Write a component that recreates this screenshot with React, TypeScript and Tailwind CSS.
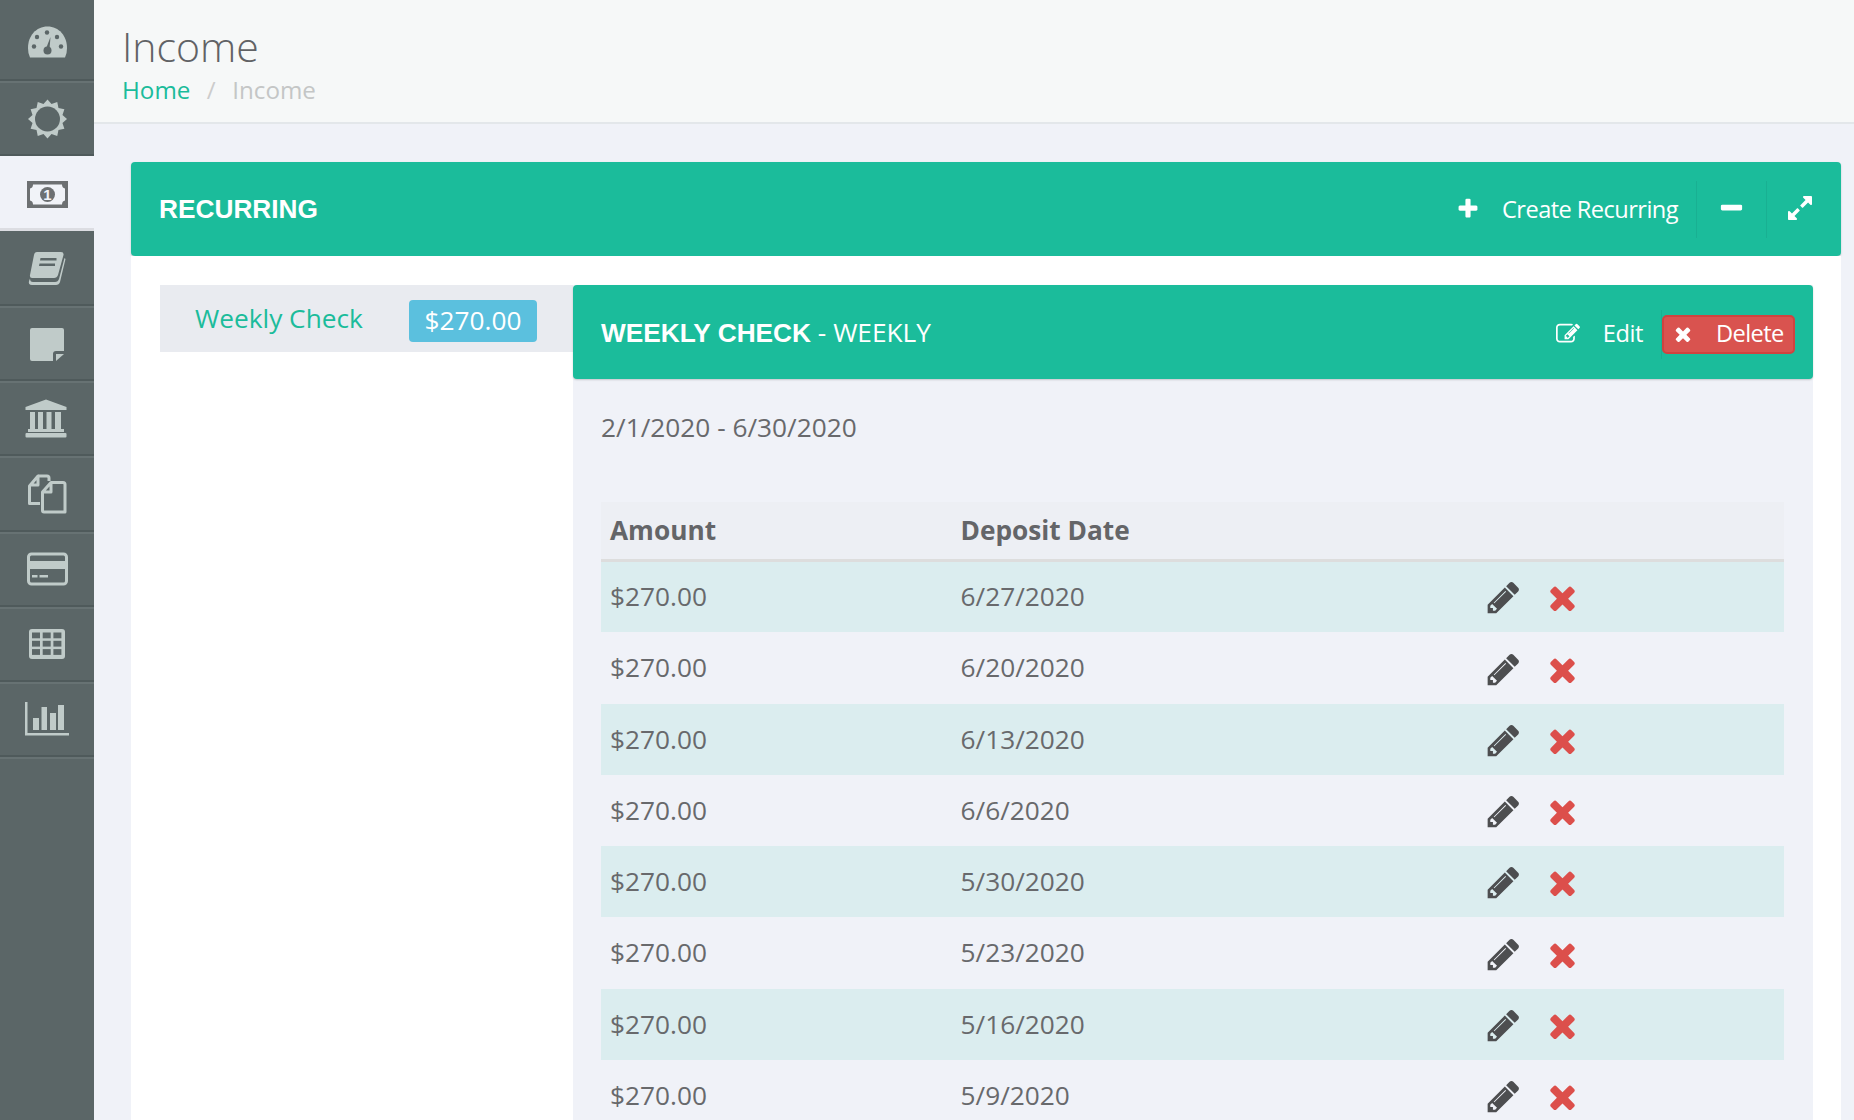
import React from "react";

const P = {
  pencil: "M491 1536l91-91-235-235-91 91v107h128v128h107zm523-928q0-22-22-22-10 0-17 7l-542 542q-7 7-7 17 0 22 22 22 10 0 17-7l542-542q7-7 7-17zm-54-192l416 416-832 832h-416v-416zm683 96q0 53-37 90l-166 166-416-416 166-165q36-38 90-38 53 0 91 38l235 234q37 39 37 91z",
  times: "M1490 1322q0 40-28 68l-136 136q-28 28-68 28t-68-28l-294-294-294 294q-28 28-68 28t-68-28l-136-136q-28-28-28-68t28-68l294-294-294-294q-28-28-28-68t28-68l136-136q28-28 68-28t68 28l294 294 294-294q28-28 68-28t68 28l136 136q28 28 28 68t-28 68l-294 294 294 294q28 28 28 68z",
  plus: "M1600 736v192q0 40-28 68t-68 28h-416v416q0 40-28 68t-68 28h-192q-40 0-68-28t-28-68v-416h-416q-40 0-68-28t-28-68v-192q0-40 28-68t68-28h416v-416q0-40 28-68t68-28h192q40 0 68 28t28 68v416h416q40 0 68 28t28 68z",
  minus: "M1600 736v192q0 40-28 68t-68 28h-1216q-40 0-68-28t-28-68v-192q0-40 28-68t68-28h1216q40 0 68 28t28 68z",
  expand: "M883 1056q0 13-10 23l-332 332 144 144q19 19 19 45t-19 45-45 19h-448q-26 0-45-19t-19-45v-448q0-26 19-45t45-19 45 19l144 144 332-332q10-10 23-10t23 10l114 114q10 10 10 23zm781-864v448q0 26-19 45t-45 19-45-19l-144-144-332 332q-10 10-23 10t-23-10l-114-114q-10-10-10-23t10-23l332-332-144-144q-19-19-19-45t19-45 45-19h448q26 0 45 19t19 45z",
  edit: "M888 1184l116-116-152-152-116 116v56h96v96h56zm440-720q-16-16-33 1l-350 350q-17 17-1 33t33-1l350-350q17-17 1-33zm80 594v190q0 119-84.500 203.500t-203.500 84.500h-832q-119 0-203.500-84.500t-84.500-203.500v-832q0-119 84.500-203.500t203.500-84.500h832q63 0 117 25 15 7 18 23 3 17-9 29l-49 49q-14 14-32 8-23-6-45-6h-832q-66 0-113 47t-47 113v832q0 66 47 113t113 47h832q66 0 113-47t47-113v-126q0-13 9-22l64-64q15-15 35-7t20 29zm-96-738l288 288-672 672h-288v-288zm444 132l-92 92-288-288 92-92q28-28 68-28t68 28l152 152q28 28 28 68t-28 68z",
};

function Fa({ d, className }: { d: string; className: string }) {
  return (
    <svg viewBox="0 0 1792 1792" className={className} fill="currentColor">
      <path d={d} />
    </svg>
  );
}

function sunPoints() {
  const pts: string[] = [];
  for (let i = 0; i < 24; i++) {
    const r = i % 2 === 0 ? 19.500 : 15.500;
    const a = (i * Math.PI) / 12 - Math.PI / 2;
    pts.push(`${(22.500 + r * Math.cos(a)).toFixed(2)},${(22 + r * Math.sin(a)).toFixed(2)}`);
  }
  return pts.join(" ");
}

const side: React.ReactNode[] = [
  <svg viewBox="0 0 44 44" className="w-11 h-11" fill="#c0cbc9" key="a">
    <path d="M5 38.500 Q3 35 3 29 C3 17 11 7.500 22.500 7.500 C34 7.500 42 17 42 29 Q42 35 40 38.500 Z" />
    <circle cx="22" cy="13.500" r="2.200" fill="#5b6667" />
    <circle cx="12" cy="18" r="2.200" fill="#5b6667" />
    <circle cx="32" cy="18" r="2.200" fill="#5b6667" />
    <circle cx="9" cy="27.500" r="2.200" fill="#5b6667" />
    <circle cx="36" cy="27.500" r="2.200" fill="#5b6667" />
    <path d="M25.500 18 L24.500 30 H20.800 Z" fill="#5b6667" />
    <circle cx="22.500" cy="31.500" r="4" fill="#5b6667" />
  </svg>,
  <svg viewBox="0 0 44 44" className="w-11 h-11" key="b">
    <polygon points={sunPoints()} fill="#c0cbc9" />
    <circle cx="22.500" cy="22" r="12.500" fill="#5b6667" />
  </svg>,
  <svg viewBox="0 0 44 44" className="w-11 h-11" key="c">
    <rect x="2" y="10" width="41" height="27" fill="#6d7072" />
    <path d="M8 13.500 H37 Q37 17 40 17.500 V29.500 Q37 30 37 33.500 H8 Q8 30 5 29.500 V17.500 Q8 17 8 13.500 Z" fill="#f1f3f8" />
    <circle cx="22.500" cy="23.500" r="7.500" fill="#6d7072" />
    <text x="22.500" y="29" textAnchor="middle" fontSize="15" fontWeight="700" fill="#f1f3f8" fontFamily="'Liberation Sans', sans-serif">1</text>
  </svg>,
  <svg viewBox="0 0 44 44" className="w-11 h-11" fill="#c0cbc9" key="d">
    <path fillRule="evenodd" d="M12 5 H36 Q39 5 38.500 8 L33 28 Q32 31 29 31 H7 Q4.500 31 5 28 L9 8 Q9.500 5 12 5 Z M15.500 11 H31.500 V13.500 H15 Z M14.500 16.500 H30 V19 H14 Z" />
    <path d="M39.500 11 L40.500 12 L35 35 Q34 38 31 38 H7 Q3 38 4 34 L5 31.500 Q5 35 8 35 H30 Q33 35 34 32 Z" />
  </svg>,
  <svg viewBox="0 0 44 44" className="w-11 h-11" fill="#c0cbc9" key="e">
    <path d="M7 6 H37 Q39 6 39 8 V29 H31 Q28 29 28 32 V39 H7 Q5 39 5 37 V8 Q5 6 7 6 Z" />
    <path d="M31 32 H39 L31 39 Z" />
  </svg>,
  <svg viewBox="0 0 44 44" className="w-11 h-11" fill="#c0cbc9" key="f">
    <path d="M21 2.500 L41.500 10 V13 H0.500 V10 Z" />
    <rect x="5" y="15" width="5" height="17" />
    <rect x="13" y="15" width="5" height="17" />
    <rect x="21.500" y="15" width="5" height="17" />
    <rect x="30" y="15" width="6" height="17" />
    <rect x="3" y="32" width="36" height="3" />
    <rect x="0.500" y="36" width="41" height="4.500" rx="1" />
  </svg>,
  <svg viewBox="0 0 44 44" className="w-11 h-11" fill="none" stroke="#c0cbc9" strokeWidth="3" strokeLinejoin="round" key="g">
    <path d="M13 4 H22 Q24 4 24 6 V9 M15 31.500 H4.500 V14 L13 4 V13 H4.500" />
    <path d="M26 10.500 H38 Q40 10.500 40 12.500 V40 H19 Q17.500 40 17.500 38.500 V20 Z M26 10.500 V20 H17.500" />
  </svg>,
  <svg viewBox="0 0 44 44" className="w-11 h-11" key="h">
    <rect x="3.500" y="7" width="38" height="30" rx="3" fill="none" stroke="#c0cbc9" strokeWidth="3" />
    <rect x="2" y="14" width="41" height="8" fill="#c0cbc9" />
    <rect x="7" y="28" width="5.500" height="2.500" fill="#c0cbc9" />
    <rect x="14.500" y="28" width="8.500" height="2.500" fill="#c0cbc9" />
  </svg>,
  <svg viewBox="0 0 44 44" className="w-11 h-11" key="i">
    <rect x="4" y="7" width="36" height="30" rx="3" fill="#c0cbc9" />
    {[0, 1, 2].map((r) =>
      [0, 1, 2].map((c) => (
        <rect key={`${r}-${c}`} x={7 + c * 10.700} y={10.500 + r * 8.300} width={8} height={5.800} fill="#5b6667" />
      ))
    )}
  </svg>,
  <svg viewBox="0 0 44 44" className="w-11 h-11" fill="#c0cbc9" key="j">
    <path d="M0 5 H2.500 V36 H44 V38.500 H0 Z" />
    <rect x="8" y="21" width="6" height="12" />
    <rect x="16.500" y="10" width="5.500" height="23" />
    <rect x="25" y="16" width="6" height="17" />
    <rect x="33" y="8" width="6" height="25" />
  </svg>,
];

const rows = [
  { d: "6/27/2020", c: "h-[72px] bg-[#dbedef]" },
  { d: "6/20/2020", c: "h-[72px]" },
  { d: "6/13/2020", c: "h-[71px] bg-[#dbedef]" },
  { d: "6/6/2020", c: "h-[71px]" },
  { d: "5/30/2020", c: "h-[71px] bg-[#dbedef]" },
  { d: "5/23/2020", c: "h-[72px]" },
  { d: "5/16/2020", c: "h-[71px] bg-[#dbedef]" },
  { d: "5/9/2020", c: "h-[71px]" },
];

export default function App() {
  return (
    <div className="flex h-[1120px] w-[1854px] overflow-hidden bg-[#f0f2f8] text-[#68696c] [font-family:'Open_Sans',sans-serif]">
      <aside className="flex w-[94px] shrink-0 flex-col bg-[#5b6667]">
        {side.map((icon, i) => (
          <div
            key={i}
            className={
              i === 2
                ? "flex h-[75.100px] items-center justify-center border-b-[3px] border-[#dcdde2] bg-[#f0f2f8] pt-[2px]"
                : i === 0
                ? "flex h-[81px] items-center justify-center border-b-2 border-b-[#4f5a5b] pt-[2px] shadow-[0_2px_0_#677273]"
                : "flex h-[75.100px] items-center justify-center border-b-2 border-b-[#4f5a5b] pt-[2px] shadow-[0_2px_0_#677273]"
            }
          >
            {icon}
          </div>
        ))}
      </aside>
      <main className="flex min-w-0 flex-1 flex-col">
        <header className="h-[124px] shrink-0 border-b-2 border-[#e3e7ea] bg-[#f6f8f8] px-[28px] pt-[19px]">
          <h1 className="text-[41px] leading-[54px] font-light text-[#616265]">Income</h1>
          <div className="mt-[1px] flex text-[24.200px] leading-[32px]">
            <span className="text-[#1bbc9b]">Home</span>
            <span className="mx-[16.500px] text-[#cccccc]">/</span>
            <span className="text-[#c4c6c6]">Income</span>
          </div>
        </header>
        <div className="px-[37px] pt-[38px] pr-[13px]">
          <div className="flex h-[94px] items-center rounded-[4px] bg-[#1bbc9b] pr-[27px] pl-[28px] text-white shadow-[0_1px_2px_rgba(0,0,0,0.18)]">
            <div className="pt-[2px] text-[26.250px] font-bold [font-family:'Liberation_Sans',sans-serif]">RECURRING</div>
            <div className="ml-auto flex h-[57px] items-center">
              <Fa d={P.plus} className="mr-[22px] h-6 w-6" />
              <span className="pt-[2px] text-[23.600px] tracking-[-0.55px]">Create Recurring</span>
              <div className="ml-[18px] h-full border-l border-[#19b092]" />
              <div className="flex w-[69px] items-center justify-center"><Fa d={P.minus} className="mb-[2px] h-[27px] w-[27px]" /></div>
              <div className="h-full border-l border-[#19b092]" />
              <div className="flex w-[47px] items-center justify-end"><Fa d={P.expand} className="mb-[2px] h-7 w-7" /></div>
            </div>
          </div>
          <div className="flex bg-white pt-[29px] pr-[28px] pl-[29px]">
            <div className="flex h-[67px] w-[413px] shrink-0 items-center bg-[#e9ebf0] pt-[2px] pr-[36px] pl-[35px] text-[#1bbc9b]">
              <span className="mb-[2px] text-[26.250px]">Weekly Check</span>
              <span className="mt-[2px] ml-auto flex h-[42px] w-[128px] items-center justify-center rounded-[4px] bg-[#5bc0de] text-[26.250px] text-white">$270.00</span>
            </div>
            <div className="flex-1 bg-[#f0f2f8]">
              <div className="flex h-[94px] items-center rounded-[4px] bg-[#1bbc9b] pt-[4px] pr-[18px] pl-[28px] text-white shadow-[0_1px_2px_rgba(0,0,0,0.18)]">
                <div className="mb-[2px] text-[26.250px]">
                  <span className="font-bold [font-family:'Liberation_Sans',sans-serif]">WEEKLY CHECK</span>
                  <span> - WEEKLY</span>
                </div>
                <div className="ml-auto flex items-center">
                  <Fa d={P.edit} className="mr-[23px] h-6 w-6" />
                  <span className="text-[23.600px] tracking-[-0.4px]">Edit</span>
                  <div className="ml-[18px] h-[49px] border-l border-[#19b092]" />
                  <div className="flex h-[39px] w-[133px] items-center rounded-[5px] border-2 border-[#d0433f] bg-[#d9534f] pl-[8px]">
                    <Fa d={P.times} className="h-[22px] w-[22px]" />
                    <span className="ml-[22px] text-[23.600px] tracking-[-0.6px]">Delete</span>
                  </div>
                </div>
              </div>
              <div className="pt-[31px] pr-[29px] pl-[28px]">
                <div className="h-[92px] text-[26.250px] leading-[35px]">2/1/2020 - 6/30/2020</div>
                <table className="w-full border-collapse text-[26.250px]">
                  <thead>
                    <tr className="h-[58px] border-b-[3px] border-[#dddddd] bg-[#edeff4] text-left text-[#646568]">
                      <th className="w-[359.500px] pl-[9px] font-bold">Amount</th>
                      <th className="w-[524px] font-bold">Deposit Date</th>
                      <th />
                    </tr>
                  </thead>
                  <tbody>
                    {rows.map((r) => (
                      <tr key={r.d} className={r.c}>
                        <td className="pl-[9px]">$270.00</td>
                        <td>{r.d}</td>
                        <td>
                          <div className="flex items-center pt-[2px]">
                            <Fa d={P.pencil} className="h-[37px] w-[37px] text-[#4d4e50]" />
                            <Fa d={P.times} className="ml-[22px] h-[37px] w-[37px] text-[#dc4f4b]" />
                          </div>
                        </td>
                      </tr>
                    ))}
                  </tbody>
                </table>
              </div>
            </div>
          </div>
        </div>
      </main>
    </div>
  );
}
